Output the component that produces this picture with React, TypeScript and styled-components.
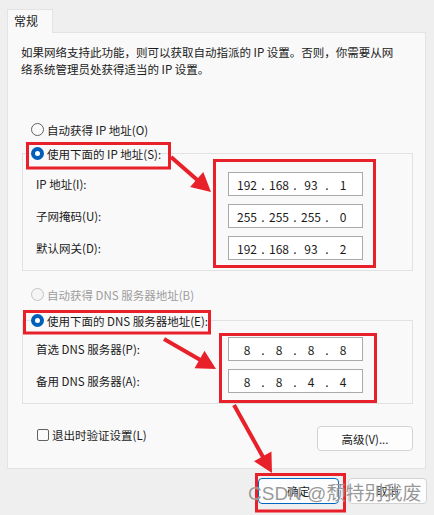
import React from "react";
import styled, { createGlobalStyle } from "styled-components";

const GlobalStyle = createGlobalStyle`
  html, body {
    margin: 0;
    padding: 0;
  }
  body {
    background: #efefef;
    font-family: "Noto Sans CJK SC", "Noto Sans", sans-serif;
    font-size: 11.5px;
    color: #1b1b1b;
  }
`;

const Window = styled.div`
  position: relative;
  width: 434px;
  height: 515px;
  box-sizing: border-box;
  padding: 9px 0 0 7px;
  background: #efefef;
  overflow: hidden;
`;

const Tab = styled.div`
  position: relative;
  z-index: 1;
  width: 46px;
  height: 24px;
  box-sizing: border-box;
  margin-bottom: -1px;
  padding-left: 6px;
  border: 1px solid #e3e3e3;
  border-bottom: none;
  background: #f9f9f9;
  font-size: 12px;
  line-height: 22px;
`;

const Panel = styled.div`
  width: 419px;
  height: 437px;
  box-sizing: border-box;
  padding: 11px 12px 0 14px;
  border: 1px solid #e3e3e3;
  background: #f9f9f9;
`;

const Description = styled.p`
  margin: 0 0 0 -1px;
  line-height: 17px;
  white-space: nowrap;
`;

const RadioRow = styled.label<{ $disabled?: boolean; $indent?: number; $top?: number }>`
  display: flex;
  align-items: center;
  gap: 3px;
  height: 17px;
  margin-left: ${(p) => p.$indent ?? 0}px;
  margin-top: ${(p) => p.$top ?? 0}px;
  color: ${(p) => (p.$disabled ? "#9d9d9d" : "#1b1b1b")};
  white-space: nowrap;
`;

const RadioDot = styled.span<{ $checked?: boolean; $disabled?: boolean }>`
  position: relative;
  flex: none;
  width: 13px;
  height: 13px;
  box-sizing: border-box;
  border-radius: 50%;
  border: ${(p) =>
    p.$checked ? "none" : `1px solid ${p.$disabled ? "#c4c4c4" : "#616161"}`};
  background: ${(p) => (p.$checked ? "#005fb8" : p.$disabled ? "#f5f5f5" : "#fbfbfb")};

  &::after {
    content: "";
    display: ${(p) => (p.$checked ? "block" : "none")};
    position: absolute;
    left: 4px;
    top: 4px;
    width: 5px;
    height: 5px;
    border-radius: 50%;
    background: #ffffff;
  }
`;

const Group = styled.fieldset<{ $top: number; $padTop: number }>`
  margin: ${(p) => p.$top}px 0 0;
  padding: ${(p) => p.$padTop}px 49px 10px 8px;
  min-width: 0;
  border: 1px solid #e2e2e2;
`;

const Legend = styled.legend`
  padding: 0;
`;

const FieldGrid = styled.div`
  display: grid;
  grid-template-columns: 1fr 135px;
  row-gap: 8px;
  align-items: center;
  padding-left: 5px;
`;

const FieldLabel = styled.span`
  white-space: nowrap;
`;

const AddressBox = styled.div`
  display: flex;
  align-items: center;
  height: 24px;
  box-sizing: border-box;
  padding-left: 5px;
  border: 1px solid #a9a9a9;
  background: #ffffff;
  font-size: 12px;
`;

const Octet = styled.span`
  width: 26px;
  text-align: center;
`;

const Dot = styled.span`
  width: 6px;
  text-align: center;
`;

const Footer = styled.div`
  display: flex;
  justify-content: space-between;
  align-items: flex-start;
  margin-top: 22px;
`;

const CheckRow = styled.label`
  display: flex;
  align-items: center;
  gap: 3px;
  height: 17px;
  margin: 0 0 0 15px;
  white-space: nowrap;
`;

const CheckBox = styled.span`
  width: 12px;
  height: 12px;
  box-sizing: border-box;
  border: 1px solid #616161;
  border-radius: 2px;
  background: #fbfbfb;
`;

const Button = styled.button<{ $width: number; $primary?: boolean }>`
  width: ${(p) => p.$width}px;
  height: ${(p) => (p.$primary !== undefined ? 26 : 25)}px;
  padding: 0;
  box-sizing: border-box;
  border: 1px solid ${(p) => (p.$primary ? "#0067c0" : "#d3d3d3")};
  border-radius: 4px;
  background: #fdfdfd;
  font-family: inherit;
  font-size: 11.5px;
  color: #1b1b1b;
`;

const DialogButtons = styled.div`
  display: flex;
  justify-content: flex-end;
  gap: 9px;
  margin-top: 9px;
  padding-right: 7px;
`;

const Overlay = styled.svg`
  position: absolute;
  left: 0;
  top: 0;
  pointer-events: none;
`;

const Watermark = styled.div`
  position: absolute;
  left: 248px;
  top: 484px;
  font-family: "Liberation Sans", "Noto Sans CJK SC", sans-serif;
  font-size: 19px;
  line-height: 20px;
  color: rgba(118, 118, 118, 0.75);
  text-shadow: 0 0 1px rgba(255, 255, 255, 0.9);
  white-space: nowrap;
  pointer-events: none;
`;

const RED = "#e8202a";

const Arrow = ({ x1, y1, x2, y2 }: { x1: number; y1: number; x2: number; y2: number }) => {
  const len = Math.hypot(x2 - x1, y2 - y1);
  const ux = (x2 - x1) / len;
  const uy = (y2 - y1) / len;
  const head = 19;
  const half = 10;
  const bx = x2 - ux * head;
  const by = y2 - uy * head;
  const points = [
    `${x2},${y2}`,
    `${bx - uy * half},${by + ux * half}`,
    `${bx + uy * half},${by - ux * half}`,
  ].join(" ");
  return (
    <g>
      <line x1={x1} y1={y1} x2={bx + ux * 2} y2={by + uy * 2} stroke={RED} strokeWidth={4} />
      <polygon points={points} fill={RED} />
    </g>
  );
};

const Address = ({ value }: { value: string }) => {
  const parts = value.split(".");
  return (
    <AddressBox>
      {parts.map((part, i) => (
        <React.Fragment key={i}>
          <Octet>{part}</Octet>
          {i < parts.length - 1 && <Dot>.</Dot>}
        </React.Fragment>
      ))}
    </AddressBox>
  );
};

const ipFields = [
  { label: "IP 地址(I):", value: "192.168.93.1" },
  { label: "子网掩码(U):", value: "255.255.255.0" },
  { label: "默认网关(D):", value: "192.168.93.2" },
];

const dnsFields = [
  { label: "首选 DNS 服务器(P):", value: "8.8.8.8" },
  { label: "备用 DNS 服务器(A):", value: "8.8.4.4" },
];

const App = () => {
  return (
    <Window>
      <GlobalStyle />
      <Tab>常规</Tab>
      <Panel>
        <Description>
          如果网络支持此功能，则可以获取自动指派的 IP 设置。否则，你需要从网
          <br />
          络系统管理员处获得适当的 IP 设置。
        </Description>

        <RadioRow $indent={9} $top={43}>
          <RadioDot />
          自动获得 IP 地址(O)
        </RadioRow>
        <Group $top={7} $padTop={10}>
          <Legend>
            <RadioRow>
              <RadioDot $checked />
              使用下面的 IP 地址(S):
            </RadioRow>
          </Legend>
          <FieldGrid>
            {ipFields.map((f) => (
              <React.Fragment key={f.label}>
                <FieldLabel>{f.label}</FieldLabel>
                <Address value={f.value} />
              </React.Fragment>
            ))}
          </FieldGrid>
        </Group>

        <RadioRow $indent={9} $top={15} $disabled>
          <RadioDot $disabled />
          自动获得 DNS 服务器地址(B)
        </RadioRow>
        <Group $top={9} $padTop={8}>
          <Legend>
            <RadioRow>
              <RadioDot $checked />
              使用下面的 DNS 服务器地址(E):
            </RadioRow>
          </Legend>
          <FieldGrid>
            {dnsFields.map((f) => (
              <React.Fragment key={f.label}>
                <FieldLabel>{f.label}</FieldLabel>
                <Address value={f.value} />
              </React.Fragment>
            ))}
          </FieldGrid>
        </Group>

        <Footer>
          <CheckRow>
            <CheckBox />
            退出时验证设置(L)
          </CheckRow>
          <Button $width={96}>高级(V)...</Button>
        </Footer>
      </Panel>

      <DialogButtons>
        <Button $width={81} $primary>
          确定
        </Button>
        <Button $width={79} $primary={false}>
          取消
        </Button>
      </DialogButtons>

      <Overlay width={434} height={515} viewBox="0 0 434 515">
        <g fill="none" stroke={RED} strokeWidth={3}>
          <rect x={27.5} y={143.5} width={142} height={24.5} />
          <rect x={214.5} y={160.5} width={160} height={106} />
          <rect x={24.5} y={311.5} width={185} height={21.5} />
          <rect x={220.5} y={334.5} width={155} height={67} />
          <rect x={256.5} y={474.5} width={88} height={36.5} />
        </g>
        <Arrow x1={171} y1={157} x2={211} y2={192} />
        <Arrow x1={164} y1={339} x2={216} y2={369} />
        <Arrow x1={234} y1={405} x2={272} y2={473} />
      </Overlay>
      <Watermark>CSDN @颓特别我废</Watermark>
    </Window>
  );
};

export default App;
